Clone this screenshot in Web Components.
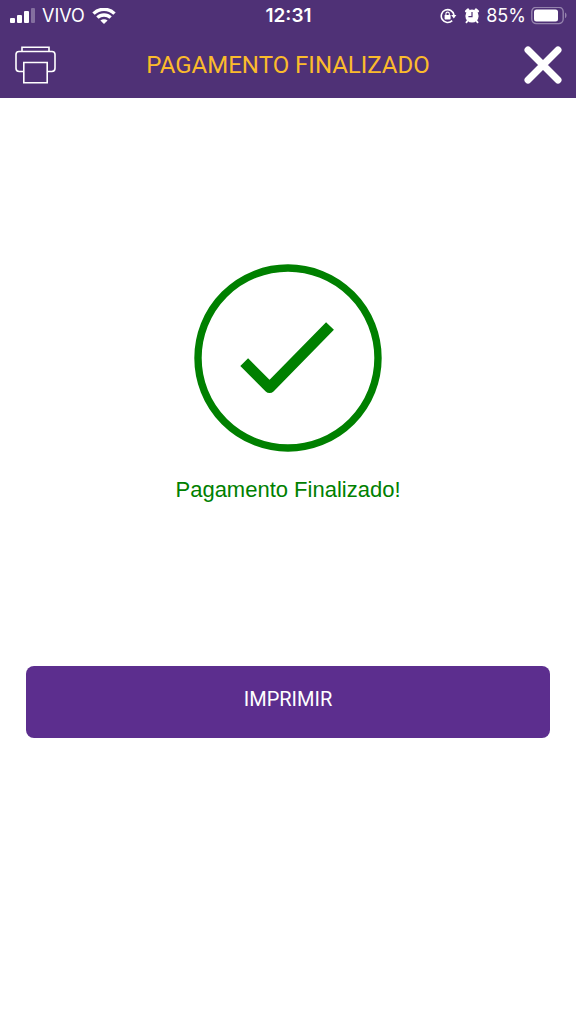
<!DOCTYPE html>
<html lang="pt-BR">
<head>
<meta charset="utf-8">
<meta name="viewport" content="width=device-width, initial-scale=1">
<title>Pagamento Finalizado</title>
<style>
  body { margin: 0; background: #fff; font-family: Roboto, sans-serif; }
</style>
</head>
<body>
<payment-page></payment-page>

<template id="status-bar">
  <style>
    :host { display: grid; grid-template-columns: 1fr auto 1fr; align-items: center; height: 32px; padding: 0 9px 0 10px; color: #fff; font: 18px/24px Inter, sans-serif; }
    div { display: flex; align-items: center; }
    .left { gap: 7px; }
    .right { justify-content: flex-end; gap: 5px; }
    .time { font-size: 19px; font-weight: 600; }
    svg { display: block; flex: none; }
  </style>
  <div class="left">
    <svg width="25" height="16" viewBox="0 0 25 16" fill="#fff" aria-hidden="true">
      <rect x="0" y="10" width="5" height="5" rx="1"/><rect x="7" y="7" width="5" height="8" rx="1"/>
      <rect x="14" y="3" width="5" height="12" rx="1"/><rect x="21" y="0" width="4" height="15" rx="1" opacity=".3"/>
    </svg>
    <slot name="carrier"></slot>
    <svg width="24" height="17" viewBox="0 0 24 17" fill="none" stroke="#fff" stroke-width="3.4" aria-hidden="true">
      <path d="M1.5 5.6a15 15 0 0 1 21 0M5.4 9.6a9.5 9.5 0 0 1 13.2 0"/>
      <path d="M12 16l-3.6-3.4a5.2 5.2 0 0 1 7.2 0z" fill="#fff" stroke="none"/>
    </svg>
  </div>
  <div class="time"><slot name="time"></slot></div>
  <div class="right">
    <svg width="18" height="16" viewBox="0 0 18 16" aria-hidden="true">
      <path d="M12.2 12.6A6.4 6.4 0 1 1 14 7" fill="none" stroke="#fff" stroke-width="1.6"/>
      <path d="M11.2 7h5.2l-2.6 3.4z" fill="#fff"/>
      <rect x="4.6" y="7" width="6" height="4.4" rx=".6" fill="#fff"/>
      <path d="M5.9 7.2V5.8a1.7 1.7 0 0 1 3.4 0v1.4" fill="none" stroke="#fff" stroke-width="1.1"/>
    </svg>
    <svg width="18" height="16" viewBox="0 0 18 16" aria-hidden="true">
      <path d="M3.4 3.2l1.6-1.4M14.6 3.2l-1.6-1.4" stroke="#fff" stroke-width="2.8" stroke-linecap="round"/>
      <path d="M4.6 12.8L3.4 14.4M13.4 12.8l1.2 1.6" stroke="#fff" stroke-width="1.8" stroke-linecap="round"/>
      <circle cx="9" cy="8" r="6.6" fill="#fff"/>
      <path d="M9 4v4.6H5.4" fill="none" stroke="#4f3176" stroke-width="1.2"/>
    </svg>
    <slot name="battery"></slot>
    <svg width="36" height="18" viewBox="0 0 36 18" aria-hidden="true">
      <rect x=".8" y=".2" width="31.4" height="16.4" rx="4.5" fill="none" stroke="#9583ad" stroke-width="1.4"/>
      <rect x="3" y="2.4" width="24" height="12" rx="2.5" fill="#fff"/>
      <path d="M34 5.6c2 .8 2 4.8 0 5.6z" fill="#9583ad"/>
    </svg>
  </div>
</template>

<template id="title-bar">
  <style>
    :host { display: grid; grid-template-columns: 1fr auto 1fr; align-items: center; height: 66px; padding: 0 14px; color: #fbbb2c; }
    h1 { margin: 0; font: 400 24px/32px Roboto, sans-serif; text-align: center; }
    button { display: block; justify-self: start; padding: 0; border: 0; background: none; cursor: pointer; }
    button:last-child { justify-self: end; }
    svg { display: block; }
  </style>
  <button type="button" aria-label="Imprimir">
    <svg width="42" height="40" viewBox="0 0 42 40" fill="none" stroke="#fff" stroke-width="1.6" aria-hidden="true">
      <path d="M8 6.5V2.2h27v4.3"/>
      <path d="M9.5 26.5H5.2a3.2 3.2 0 0 1-3.2-3.2V9.5a3 3 0 0 1 3-3h33a3 3 0 0 1 3 3v13.8a3.2 3.2 0 0 1-3.2 3.2H33"/>
      <path d="M9.8 17.5h23.4v20.2H9.8z"/>
    </svg>
  </button>
  <h1><slot></slot></h1>
  <button type="button" aria-label="Fechar">
    <svg width="38" height="38" viewBox="0 0 38 38" aria-hidden="true">
      <path d="M4 4l30 30M34 4L4 34" stroke="#fff" stroke-width="7" stroke-linecap="round"/>
    </svg>
  </button>
</template>

<template id="payment-result">
  <style>
    :host { display: flex; flex-direction: column; align-items: center; gap: 24px; color: #008000; }
    svg { display: block; }
    p { margin: 0; font: 22px/28px "Liberation Sans", Arial, sans-serif; text-align: center; }
  </style>
  <svg width="188" height="188" viewBox="0 0 188 188" fill="none" stroke="currentColor" aria-hidden="true">
    <circle cx="94" cy="94" r="90" stroke-width="7.4"/>
    <path d="M50.2 98.2L75.6 123.6L136 62" stroke-width="11" stroke-linejoin="round"/>
  </svg>
  <p><slot></slot></p>
</template>

<template id="action-button">
  <style>
    :host { display: block; }
    button { display: block; width: 100%; height: 72px; padding: 0 0 6px; border: 0; border-radius: 8px; background: #5c2e8e; color: #fff; font: 400 20px/28px Roboto, sans-serif; cursor: pointer; }
  </style>
  <button type="button"><slot></slot></button>
</template>

<template id="payment-page">
  <style>
    :host { display: block; }
    header { background: #4f3176; }
    main { display: flex; flex-direction: column; gap: 162px; padding: 166px 26px 26px; }
  </style>
  <header>
    <status-bar><span slot="carrier">VIVO</span><span slot="time">12:31</span><span slot="battery">85%</span></status-bar>
    <title-bar>PAGAMENTO FINALIZADO</title-bar>
  </header>
  <main>
    <payment-result>Pagamento Finalizado!</payment-result>
    <action-button>IMPRIMIR</action-button>
  </main>
</template>

<script>
  class TemplateElement extends HTMLElement {
    constructor() {
      super();
      const template = document.getElementById(this.localName);
      this.attachShadow({ mode: "open" }).append(template.content.cloneNode(true));
    }
  }
  for (const name of ["status-bar", "title-bar", "payment-result", "action-button", "payment-page"]) {
    customElements.define(name, class extends TemplateElement {});
  }
</script>
</body>
</html>
